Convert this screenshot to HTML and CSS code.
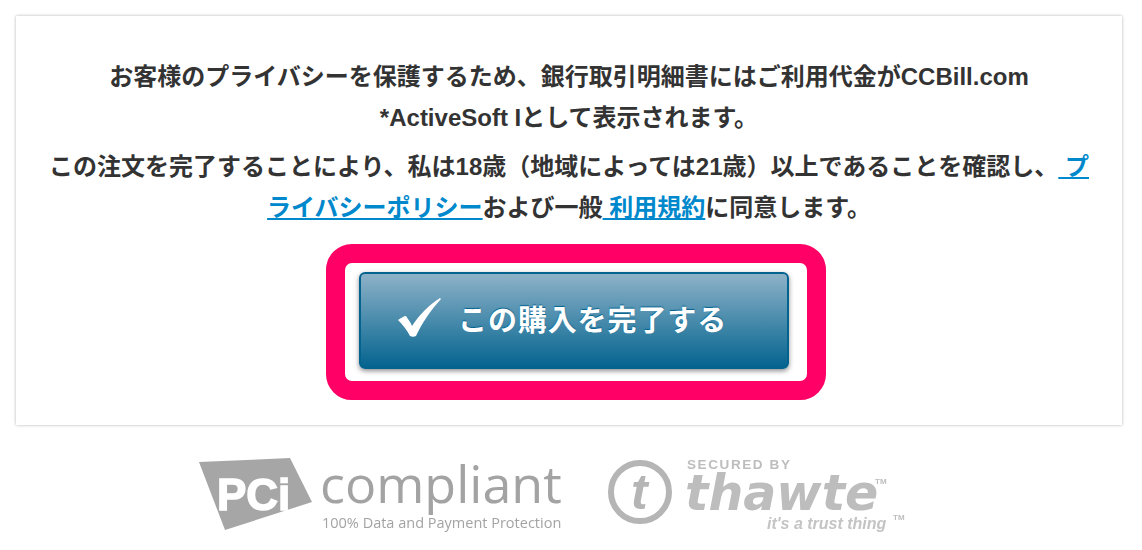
FILE: index.html
```html
<!DOCTYPE html>
<html lang="ja">

<head>
  <meta charset="UTF-8">
  <meta name="viewport" content="width=device-width, initial-scale=1.0">
  <title>購入の確認</title>
  <link rel="stylesheet" href="styles.css">
</head>

<body>
  <div class="panel">
    <p class="notice">お客様のプライバシーを保護するため、銀行取引明細書にはご利用代金がCCBill.com<br>*ActiveSoft Iとして表示されます。</p>
    <p class="notice agree">この注文を完了することにより、私は18歳（地域によっては21歳）以上であることを確認し、<a href="#">&nbsp;プ<br>ライバシーポリシー</a>および一般<a href="#">&nbsp;利用規約</a>に同意します。</p>
    <div class="highlight">
      <a class="buy-btn" href="#">
        <svg class="check" width="46" height="42" viewBox="0 0 46 42">
          <path d="M1 23 C4 21 7 19 9 19 C11 22 14 26 15 29 C22 18 32 8 43 1 L44 2 C34 13 25 26 19 39 C17 40 15 40 13 39 C10 33 6 28 1 23 Z" fill="#fff" />
        </svg>
        <span>この購入を完了する</span>
      </a>
    </div>
  </div>

  <div class="logos">
    <svg class="logo" width="370" height="76" viewBox="0 0 370 76">
      <polygon points="1,5 92,1 114,45 27,73" fill="#a6a6a6" />
      <text class="pci" x="19" y="53">PCi</text>
      <text class="compliant" x="122" y="46">compliant</text>
      <text class="tagline" x="124" y="71">100% Data and Payment Protection</text>
    </svg>
    <svg class="logo" width="300" height="76" viewBox="0 0 300 76">
      <circle cx="34" cy="35" r="29" fill="none" stroke="#b5b5b5" stroke-width="6" />
      <text class="t-mark" x="25" y="52">t</text>
      <text class="secured" x="81" y="12">SECURED BY</text>
      <text class="thawte" x="79" y="53">thawte</text>
      <text class="tm" x="269" y="27">TM</text>
      <text class="trust" x="161" y="72">it's a trust thing</text>
      <text class="tm" x="287" y="63">TM</text>
    </svg>
  </div>
</body>

</html>
```

FILE: styles.css
```css
body {
  margin: 0;
  background: #fff;
  font-family: "Liberation Sans", "Noto Sans CJK JP", sans-serif;
}

.panel {
  margin: 16px 20px 0 16px;
  height: 409px;
  padding-top: 40px;
  box-sizing: border-box;
  background: #fff;
  box-shadow: 0 0 3px rgba(0, 0, 0, 0.3);
  display: flex;
  flex-direction: column;
  align-items: center;
}

.notice {
  margin: 0;
  font-size: 24px;
  font-weight: bold;
  line-height: 41px;
  color: #333;
  text-align: center;
  white-space: nowrap;
}

.agree {
  margin-top: 8px;
}

.agree a {
  color: #0088cc;
}

.highlight {
  margin: 16px 0 0 14px;
  width: 500px;
  height: 156px;
  box-sizing: border-box;
  border: 19px solid #ff0066;
  border-radius: 26px;
  background: #fff;
  display: flex;
  padding: 9px 0 0 14px;
}

.buy-btn {
  width: 430px;
  height: 97px;
  box-sizing: border-box;
  border: 2px solid #04628f;
  border-radius: 6px;
  background: linear-gradient(#8db2c8, #04648f);
  box-shadow: 0 2px 5px rgba(0, 0, 0, 0.45);
  color: #fff;
  text-decoration: none;
  display: flex;
  align-items: center;
  padding: 0 0 6px 36px;
  font-size: 29px;
  font-weight: bold;
  letter-spacing: 0.9px;
  text-shadow: 0 -1px 1px #04628f;
}

.check {
  margin-right: 15px;
  filter: blur(0.5px);
}

.logos {
  display: flex;
  gap: 38px;
  margin: 32px 0 0 198px;
}

.logo {
  display: block;
  filter: blur(0.5px);
}

.pci {
  font-size: 44px;
  font-weight: bold;
  fill: #fff;
  stroke: #fff;
  stroke-width: 1.5px;
}

.compliant {
  font-family: "Open Sans", sans-serif;
  font-size: 52px;
  fill: #a3a3a3;
}

.tagline {
  font-family: "Open Sans", sans-serif;
  font-size: 14.5px;
  fill: #a3a3a3;
}

.t-mark {
  font-size: 50px;
  font-weight: bold;
  font-style: italic;
  fill: #b5b5b5;
}

.secured {
  font-size: 13.5px;
  font-weight: bold;
  letter-spacing: 1.6px;
  fill: #bdbdbd;
}

.thawte {
  font-family: "DejaVu Sans", sans-serif;
  font-size: 49px;
  font-weight: bold;
  font-style: italic;
  fill: #bdbdbd;
}

.tm {
  font-size: 8px;
  font-weight: bold;
  fill: #bdbdbd;
}

.trust {
  font-size: 16px;
  font-weight: bold;
  font-style: italic;
  fill: #c4c4c4;
}
```
